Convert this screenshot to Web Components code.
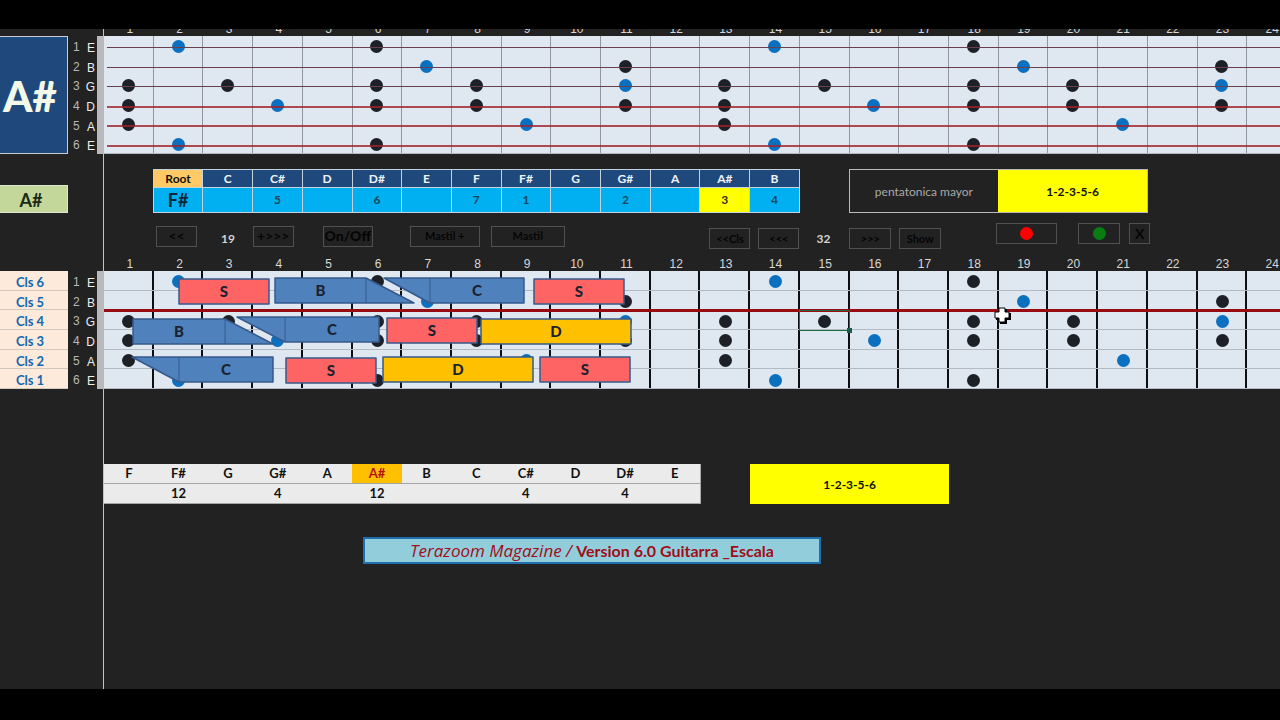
<!DOCTYPE html>
<html lang="es">
<head>
<meta charset="utf-8">
<title>Terazoom Magazine - Guitarra Escala</title>
<style>
  html, body { margin: 0; background: #000; }
  body {
    box-sizing: border-box; min-height: 100vh; padding: 29px 0 31px;
    display: grid; overflow-x: hidden;
    font-family: Lato, "Open Sans", sans-serif; color: #111;
  }
</style>
</head>
<body>
<scale-sheet>
  <sheet-row>
    <key-badge slot="side">A#</key-badge>
    <fret-board variant="strings"></fret-board>
  </sheet-row>
  <sheet-row class="scale">
    <key-badge slot="side" small>A#</key-badge>
    <scale-table></scale-table>
    <scale-name name="pentatonica mayor" formula="1-2-3-5-6"></scale-name>
  </sheet-row>
  <sheet-row class="tools"><tool-bar></tool-bar></sheet-row>
  <sheet-row>
    <cls-list slot="side"></cls-list>
    <fret-board variant="frets"></fret-board>
  </sheet-row>
  <sheet-row class="counts">
    <count-table></count-table>
    <formula-box>1-2-3-5-6</formula-box>
  </sheet-row>
  <title-banner><em>Terazoom Magazine /</em> <b>Version 6.0 Guitarra _Escala</b></title-banner>
</scale-sheet>

<script>
const define = (name, css, render) => customElements.define(name, class extends HTMLElement {
  connectedCallback() {
    if (this.shadowRoot) return;
    this.attachShadow({ mode: 'open' }).innerHTML = `<style>*{box-sizing:border-box}${css}</style>${render(this)}`;
  }
});
const range = n => Array.from({ length: n }, (_, i) => i + 1);

define('scale-sheet', `
  :host { display: block; min-width: 0; overflow: hidden;
    background: linear-gradient(#c4c4c4, #c4c4c4) 103px 0 / 1px 100% no-repeat #222; }
`, () => `<slot></slot>`);

/* A side pane followed by the 24 columns; the last column runs off the window. */
define('sheet-row', `
  :host { display: grid; grid-template-columns: 68px 36px minmax(0, 1fr); align-items: end; }
  :host(.scale) { margin-top: 15px; }
  :host(.tools) { margin-top: 10px; }
  :host(.counts) { margin-top: 75px; }
  .side { align-self: stretch; display: flex; flex-direction: column; justify-content: flex-end; }
  .main { grid-column: 3; margin-right: -17px;
    display: grid; grid-template-columns: repeat(24, minmax(0, 1fr)); }
`, () => `<div class="side"><slot name="side"></slot></div><div class="main"><slot></slot></div>`);

define('key-badge', `
  :host { display: flex; box-sizing: border-box; height: 118px; align-items: center; justify-content: center;
    background: #1f497d; color: #f3f8e8; border: 1px solid #c9ced6; border-left: 0;
    font-weight: 900; font-size: 42px; padding: 2px 7px 0 0; }
  :host([small]) { height: 28px; background: #c4d79b; color: #1b2a17; font-size: 18px; font-weight: 700; padding-right: 5px; border-color: #dfe6cf; }
`, () => `<slot></slot>`);

define('cls-list', `
  :host { display: block; }
  ul { list-style: none; margin: 0; padding: 0; height: 118px; display: grid; grid-template-rows: repeat(6, minmax(0, 1fr));
    background: #fdeada; color: #1168b0; font-weight: 700; font-size: 13px; line-height: 18px; }
  li { display: grid; place-items: center; border-bottom: 1px solid #d3c8bd; padding: 2px 8px 0 0; }
`, () => `<ul>${[6, 5, 4, 3, 2, 1].map(n => `<li>Cls ${n}</li>`).join('')}</ul>`);

const NOTES = [
  { name: 'E', root: [2, 14], tone: [6, 18] },
  { name: 'B', root: [7, 19], tone: [11, 23] },
  { name: 'G', root: [11, 23], tone: [1, 3, 6, 8, 13, 15, 18, 20] },
  { name: 'D', root: [4, 16], tone: [1, 6, 8, 11, 13, 18, 20, 23] },
  { name: 'A', root: [9, 21], tone: [1, 13] },
  { name: 'E', root: [2, 14], tone: [6, 18] }
];

/* Blocks over the frets, in units of a 1193 x 118 board. before / after: length of the slanted run. */
const BLOCKS = [
  { t: 'S', x: 75, y: 8, w: 90 }, { t: 'B', x: 171, y: 7, w: 91, after: 48 },
  { t: 'C', x: 326, y: 7, w: 94, before: 46 }, { t: 'S', x: 430, y: 8, w: 90 },
  { t: 'B', x: 29, y: 48, w: 92, after: 48 }, { t: 'C', x: 181, y: 46, w: 94, before: 48 },
  { t: 'S', x: 283, y: 47, w: 90 }, { t: 'D', x: 377, y: 48, w: 150 },
  { t: 'C', x: 75, y: 86, w: 94, before: 47 }, { t: 'S', x: 182, y: 87, w: 90 },
  { t: 'D', x: 279, y: 86, w: 150 }, { t: 'S', x: 436, y: 86, w: 90 }
];
const pct = n => `${n / 1193 * 100}%`;
const block = ({ t, x, y, w, before = 0, after = 0 }) => {
  const all = before + w + after;
  const fill = { S: '#ff6464', D: '#ffc000' }[t] || '#4f81bd';
  return `<div class="block" style="left:${pct(x - before)};width:${pct(all)};top:${y}px">
    <svg viewBox="0 0 ${all} 25" preserveAspectRatio="none" aria-hidden="true">
      <polygon points="0,0 ${before + w},0 ${all},25 ${before},25" fill="${fill}" stroke="#36598c" stroke-width="1.5" stroke-linejoin="round" vector-effect="non-scaling-stroke"/>
      ${before ? `<path d="M${before} 0V25" stroke="#36598c"/>` : ''}${after ? `<path d="M${w} 0V25" stroke="#36598c"/>` : ''}
    </svg>
    <span style="left:${before / all * 100}%;width:${w / all * 100}%">${t}</span></div>`;
};

define('fret-board', `
  :host { display: block; position: relative; grid-column: 1 / -1; }
  .nums { display: grid; grid-template-columns: repeat(24, minmax(0, 1fr)); grid-template-rows: 22px; align-items: end;
    font: 12px/14px "Liberation Sans", sans-serif; color: #d8d8d8; text-align: center; padding-left: 1px; }
  :host([variant=strings]) .nums { grid-template-rows: 7px; }
  .area { display: flex; margin-left: -36px; height: 118px; }
  .names { flex: 0 0 36px; display: grid; grid-template-rows: repeat(6, minmax(0, 1fr)); border-right: 7px solid #b9b9bb;
    font: 12px/18px "Liberation Sans", sans-serif; color: #b8b8b8; }
  .names div { display: flex; justify-content: space-between; padding: 2px 2px 0 5px; }
  .names i { font-style: normal; }
  .names b { font-weight: 400; padding-top: 1px; color: #eee; }
  .board { flex: 1; position: relative; display: grid; grid-template-rows: repeat(6, minmax(0, 1fr)); background: #dfe8f1; }
  .row { display: grid; grid-template-columns: repeat(24, minmax(0, 1fr)); position: relative; }
  .cell { display: grid; place-items: center; padding: 3px 0 0 2px; border-right: 2px solid #0d0f12; }
  .dot { width: 13px; height: 13px; border-radius: 50%; background: #1d2127; }
  .dot.root { background: #0c70c0; }
  :host([variant=frets]) .row { border-bottom: 1px solid #b4bac1; }
  :host([variant=frets]) .row:nth-child(3) { border-top: 3px solid #990b12; margin-top: -1px; }
  :host([variant=frets]) .row:nth-child(3) .cell { padding-top: 1px; }
  :host([variant=strings]) .cell { border-right: 1px solid #91969e; padding: 2px 0 0; }
  :host([variant=strings]) .board { border-bottom: 1px solid #b4bac1; }
  .string { position: absolute; left: 3px; right: 0; top: 11px; height: 1px; background: #67404f; }
  .string.low { height: 2px; background: #a1202acc; }
  .block { position: absolute; height: 25px; }
  .block svg { position: absolute; inset: 0; width: 100%; height: 100%; overflow: visible; }
  .block span { position: absolute; top: 0; bottom: 0; display: grid; place-items: center; font: 900 15px/25px Lato, sans-serif; color: #1c2230; }
  .pick { position: absolute; left: calc(100% * 14 / 24 - 1px); width: calc(100% / 24 + 1px); top: 39px; height: 21px;
    border: 1px solid #1d6b40; }
  .pick::after { content: ""; position: absolute; right: -3px; bottom: -3px; width: 5px; height: 5px; background: #1d5a48; }
  .cursor { position: absolute; left: 75%; top: 36px; width: 17px; height: 17px; margin-left: -5px; }
`, el => {
  const strings = el.getAttribute('variant') === 'strings';
  return `<div class="nums">${range(24).map(n => `<span>${n}</span>`).join('')}</div>
  <div class="area">
    <div class="names">${NOTES.map((s, i) => `<div><i>${i + 1}</i><b>${s.name}</b></div>`).join('')}</div>
    <div class="board">${NOTES.map((s, i) => `<div class="row">${range(24).map(n => `<div class="cell">${
      s.root.includes(n) ? '<div class="dot root"></div>' : s.tone.includes(n) ? '<div class="dot"></div>' : ''}</div>`).join('')}${
      strings ? `<div class="string ${i > 2 ? 'low' : ''}"></div>` : ''}</div>`).join('')}
      ${strings ? '' : '<div class="pick"></div>' + BLOCKS.map(block).join('') + `
      <svg class="cursor" viewBox="0 0 17 17" aria-hidden="true"><path d="M6 2h7v4h4v7h-4v4H6v-4H2V6h4z" fill="#000"/><path d="M5 1h6v4h4v6h-4v4H5v-4H1V5h4z" fill="#fff" stroke="#000"/></svg>`}
    </div>
  </div>`;
});

const SCALE = [['C', ''], ['C#', 5], ['D', ''], ['D#', 6], ['E', ''], ['F', 7], ['F#', 1], ['G', ''], ['G#', 2], ['A', ''], ['A#', 3], ['B', 4]];
define('scale-table', `
  :host { display: block; grid-column: 2 / 15; margin-left: -1px; }
  table { width: 100%; table-layout: fixed; border-collapse: collapse; text-align: center; font-weight: 700; }
  th, td { border: 1px solid #c3d3de; padding: 0; font-size: 12px; }
  th { height: 18px; background: #1f497d; color: #f0f4fa; line-height: 17px; }
  td { height: 25px; background: #00b0f0; color: #1b4660; line-height: 24px; }
  th.root { background: #ffc966; color: #111; }
  td.root { font-size: 18px; color: #10263a; }
  td.on { background: #ff0; color: #333; }
`, () => `<table><thead><tr><th class="root">Root</th>${SCALE.map(s => `<th>${s[0]}</th>`).join('')}</tr></thead>
  <tbody><tr><td class="root">F#</td>${SCALE.map(s => `<td class="${s[0] === 'A#' ? 'on' : ''}">${s[1]}</td>`).join('')}</tr></tbody></table>`);

define('scale-name', `
  :host { display: grid; grid-column: 16 / 22; grid-template-columns: 1fr 1fr; height: 44px; box-sizing: border-box; margin-left: -1px; border: 1px solid #b9b9b9; font-size: 12px; }
  div { display: grid; place-items: center; color: #a9a9a9; }
  .f { background: #ff0; color: #111; font-weight: 700; }
`, el => `<div>${el.getAttribute('name')}</div><div class="f">${el.getAttribute('formula')}</div>`);

/* [kind, label, width share, gap share before it, vertical place, extra class] */
const TOOLS = [
  ['b', '&lt;&lt;', 41, 52, 'center'], ['t', '19', 32, 15, 'end'], ['b', '+&gt;&gt;&gt;', 41, 9, 'center'],
  ['b', 'On/Off', 50, 29, 'center', 'big'], ['b', 'Mastil +', 70, 37, 'center', 'sm'], ['b', 'Mastil', 74, 11, 'center', 'sm'],
  ['b', '&lt;&lt;Cls', 41, 145, 'end', 'sm'], ['b', '&lt;&lt;&lt;', 41, 8, 'end', 'sm'], ['t', '32', 32, 8, 'end'],
  ['b', '&gt;&gt;&gt;', 42, 10, 'end', 'sm'], ['b', 'Show', 42, 8, 'end', 'sm'],
  ['b', '<i class="red"></i>', 61, 55, 'start'], ['b', '<i class="green"></i>', 42, 21, 'start'], ['b', 'X', 21, 9, 'start']
];
define('tool-bar', `
  :host { display: grid; grid-column: 1 / -1; height: 26px;
    grid-template-columns: ${TOOLS.map(t => `minmax(0,${t[3]}fr) minmax(0,${t[2]}fr)`).join(' ')} minmax(0,147fr); }
  button, output { height: 21px; padding: 0; font: 700 14px/18px Lato, sans-serif; white-space: nowrap; }
  button { width: 100%; background: none; border: 1px solid #505050; color: #050505; display: grid; place-items: center; }
  button.sm { font-size: 11px; }
  button.big { font-weight: 900; }
  output { color: #d4d4d4; text-align: center; font-size: 12px; line-height: 21px; }
  i { width: 13px; height: 13px; border-radius: 50%; background: #f00; }
  i.green { background: #0a7d12; }
`, () => TOOLS.map(([k, label, , , place, cls = ''], i) => {
  const at = `style="grid-row:1;grid-column:${i * 2 + 2};align-self:${place}"`;
  const aria = label.includes('red') ? 'aria-label="Rojo"' : label.includes('green') ? 'aria-label="Verde"' : '';
  return k === 'b' ? `<button type="button" class="${cls}" ${aria} ${at}>${label}</button>` : `<output ${at}>${label}</output>`;
}).join(''));

const COUNTS = [['F', ''], ['F#', 12], ['G', ''], ['G#', 4], ['A', ''], ['A#', 12], ['B', ''], ['C', ''], ['C#', 4], ['D', ''], ['D#', 4], ['E', '']];
define('count-table', `
  :host { display: block; grid-column: 1 / 13; }
  table { width: 100%; table-layout: fixed; border-spacing: 0; background: #ebebeb; text-align: center; font-size: 13px; line-height: 19px; font-weight: 700; border-right: 1px solid #aaa; }
  th, td { padding: 0; height: 20px; border-bottom: 1px solid #a6a6a6; }
  .on { background: #ffc000; color: #b01208; }
`, () => `<table><thead><tr>${COUNTS.map(c => `<th class="${c[0] === 'A#' ? 'on' : ''}">${c[0]}</th>`).join('')}</tr></thead>
  <tbody><tr>${COUNTS.map(c => `<td>${c[1]}</td>`).join('')}</tr></tbody></table>`);

define('formula-box', `
  :host { grid-column: 14 / 18; align-self: stretch; display: grid; place-items: center; background: #ff0; font-weight: 700; font-size: 12px; }
`, () => `<slot></slot>`);

define('title-banner', `
  :host { display: grid; grid-template-columns: minmax(0, 1fr) 458px minmax(0, 1fr); margin: 33px 96px 0 0; }
  p { grid-column: 2; box-sizing: border-box; margin: 0; height: 27px; border: 2px solid #1f6fae; background: #92cddc; color: #a00d18;
    font-size: 16px; line-height: 23px; text-align: center; white-space: nowrap; }
  ::slotted(em) { font-family: "Open Sans", sans-serif; font-size: 17px; }
`, () => `<p><slot></slot></p>`);
</script>
</body>
</html>
